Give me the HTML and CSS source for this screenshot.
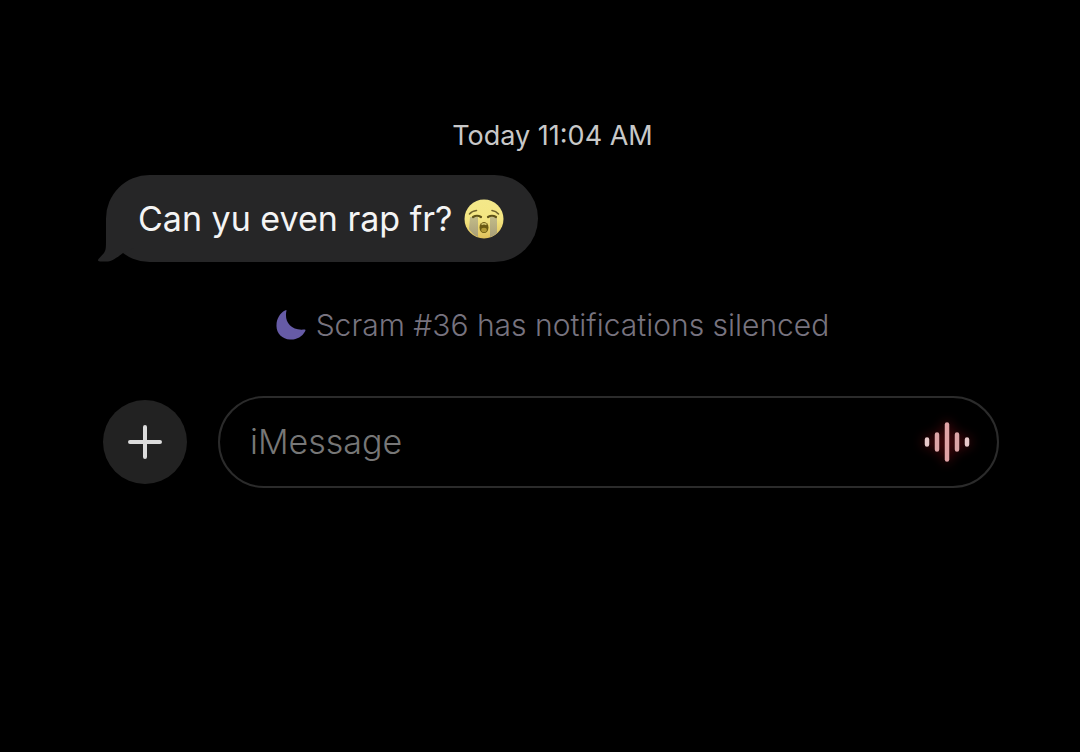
FILE: index.html
```
<!DOCTYPE html>
<html lang="en-us">
  <head>
    <meta charset="utf-8">
    <meta name="viewport" content="width=device-width, initial-scale=1.0">
    <title>Messages</title>
    <link rel="stylesheet" href="styles.css">
  </head>
  <body>
    <main class="chat">
      <time class="timestamp">Today 11:04 AM</time>

      <div class="bubble">
        <svg class="bubble-tail" viewBox="0 0 36 44" aria-hidden="true">
          <path d="M8 0V22C8 29 8 32 6 35L0.500 41C-0.500 42.500 0 43.500 2 43.500H10C14 43 20 39 25 35L36 30V0Z" fill="#262627"/>
        </svg>
        <span class="bubble-text">Can yu even rap fr?</span>
        <svg class="emoji" viewBox="0 0 40 40" role="img" aria-label="Loudly crying face">
          <defs>
            <linearGradient id="face" x1="0" y1="0" x2="0" y2="1">
              <stop offset="0" stop-color="#f3e88a"/>
              <stop offset="0.500" stop-color="#f4e682"/>
              <stop offset="1" stop-color="#dfc05a"/>
            </linearGradient>
            <linearGradient id="tear" x1="0" y1="0" x2="0" y2="1">
              <stop offset="0" stop-color="#c2bb88"/>
              <stop offset="1" stop-color="#a99f78"/>
            </linearGradient>
          </defs>
          <circle cx="20" cy="20" r="19.500" fill="url(#face)"/>
          <path d="M6 18h8v20q-6-3-9-8zM26 18h7v16q-3 3-7 4z" fill="url(#tear)"/>
          <path d="M5.500 15q2.500-3 7-3.500M28 11.500q4 0.500 6.500 3.500" fill="none" stroke="#71652e" stroke-width="1.600" stroke-linecap="round"/>
          <path d="M9 18q4-2.500 8 0M24 18q4-2.500 8 0" fill="none" stroke="#5e5219" stroke-width="2.200" stroke-linecap="round"/>
          <ellipse cx="20" cy="28.500" rx="4.500" ry="5.500" fill="#6b5a12"/>
          <ellipse cx="20" cy="31" rx="2.800" ry="2.200" fill="#b29a36"/>
          <path d="M17.500 25.500q2.500-1.500 5 0" fill="none" stroke="#d8ca72" stroke-width="1.500"/>
        </svg>
      </div>

      <p class="notice">
        <svg class="moon" viewBox="0 0 30 30" aria-hidden="true">
          <path d="M10.500 0.500C8 11 14 21 28.500 19.500C30 19.300 29.500 20.500 29 21.500C26 27 20 30 14 29.500C6 29 0 23 0.500 15C0.500 9 4 3 9 0.500Q10.500 -0.500 10.500 0.500Z" fill="#665ba6"/>
        </svg>
        <span>Scram #36 has notifications silenced</span>
      </p>

      <form class="composer">
        <button class="add-button" type="button" aria-label="Add attachment">
          <svg class="plus" viewBox="0 0 34 34" aria-hidden="true">
            <path d="M17 2V32M2 17H32" stroke="#dcdcdc" stroke-width="4" stroke-linecap="round"/>
          </svg>
        </button>
        <div class="field">
          <input class="message-input" type="text" placeholder="iMessage" aria-label="iMessage">
          <button class="audio-button" type="button" aria-label="Record audio">
            <svg class="wave" viewBox="0 0 46 42" aria-hidden="true">
              <g stroke-linecap="round" stroke-width="4.500" fill="none">
                <path d="M3 18.500V23.500M43 18.500V23.500" stroke="#e6c9ca"/>
                <path d="M13 13.500V28.500M33 13.500V28.500" stroke="#dba4a6"/>
                <path d="M23 3.500V38.500" stroke="#dfa3a6"/>
              </g>
            </svg>
          </button>
        </div>
      </form>
    </main>
  </body>
</html>
```
FILE: styles.css
```
* {
  box-sizing: border-box;
}
body {
  margin: 0;
  background-color: #000;
  color: #fff;
  font-family: Inter, "Liberation Sans", sans-serif;
}
.chat {
  display: flex;
  flex-direction: column;
  padding: 120px 81px 40px 106px;
}
.timestamp {
  align-self: center;
  font-size: 27px;
  line-height: 32px;
  color: #c8c8c8;
}
.bubble {
  position: relative;
  align-self: flex-start;
  display: flex;
  align-items: center;
  gap: 12px;
  margin-top: 23px;
  padding: 22px 34px 22px 32px;
  border-radius: 44px;
  background-color: #262627;
}
/* tail hangs off the bottom left corner */
.bubble-tail {
  position: absolute;
  left: -8px;
  bottom: 0;
  width: 36px;
  height: 44px;
}
.bubble-text {
  position: relative;
  font-size: 34px;
  line-height: 43px;
  color: #f4f4f4;
}
.emoji {
  width: 40px;
  height: 40px;
}
.notice {
  display: flex;
  align-items: center;
  align-self: center;
  gap: 10px;
  margin: 46px 0 0;
  font-size: 30px;
  font-weight: 300;
  line-height: 34px;
  color: #77737f;
}
.moon {
  width: 30px;
  height: 30px;
}
.composer {
  display: flex;
  align-items: center;
  gap: 31px;
  margin: 54px 0 0 -3px;
}
.add-button {
  display: flex;
  align-items: center;
  justify-content: center;
  flex: none;
  width: 84px;
  height: 84px;
  padding: 0;
  border: 0;
  border-radius: 50%;
  background-color: #222;
}
.plus {
  width: 34px;
  height: 34px;
}
.field {
  display: flex;
  align-items: center;
  flex: 1;
  height: 92px;
  padding: 0 27px 0 30px;
  border: 2px solid #2b2b2b;
  border-radius: 46px;
}
.message-input {
  flex: 1;
  min-width: 0;
  padding: 0;
  border: 0;
  outline: 0;
  background: none;
  color: #fff;
  font-family: inherit;
  font-size: 34px;
  font-weight: 300;
  line-height: 40px;
}
.message-input::placeholder {
  color: #777;
  opacity: 1;
}
.audio-button {
  display: flex;
  padding: 0;
  border: 0;
  background: none;
}
.wave {
  width: 46px;
  height: 42px;
  filter: drop-shadow(0 0 6px #7a0c14);
}
```
